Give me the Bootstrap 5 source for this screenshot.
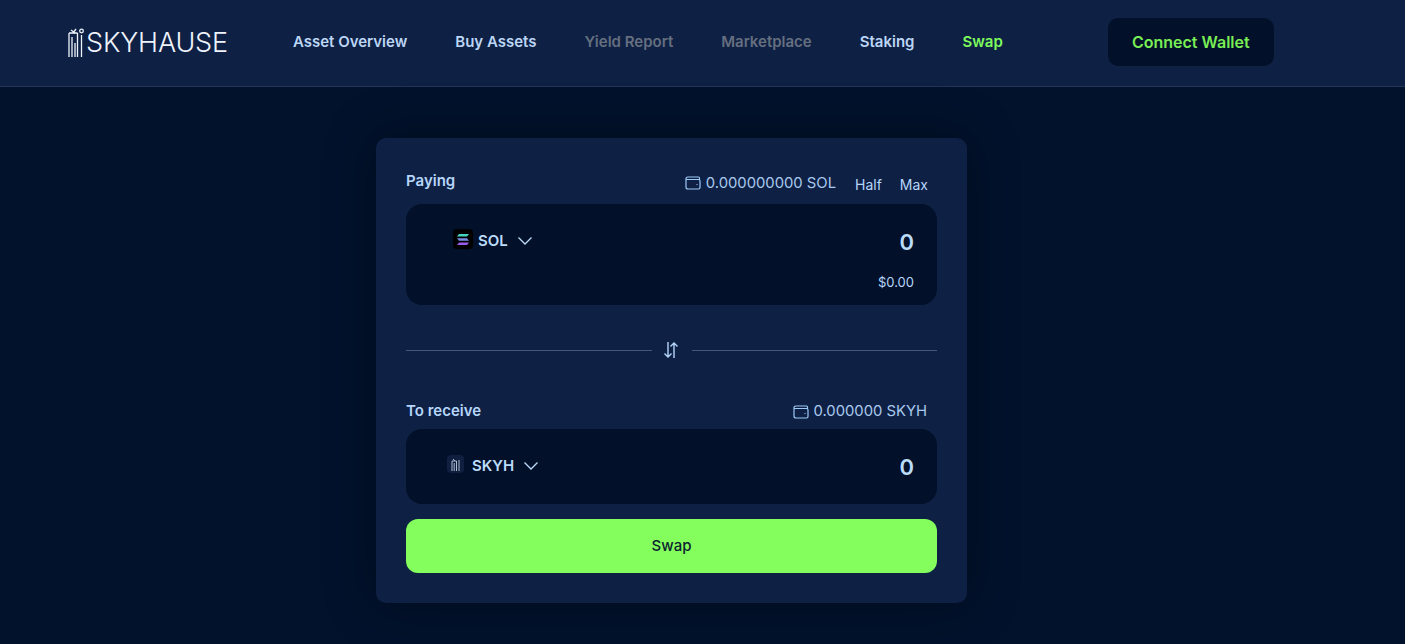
<!DOCTYPE html>
<html lang="en">
<head>
    <meta charset="UTF-8">
    <meta name="viewport" content="width=device-width, initial-scale=1.0">
    <title>Skyhause Swap</title>
    <link rel="stylesheet" href="https://cdn.jsdelivr.net/npm/bootstrap@5.3.2/dist/css/bootstrap.min.css">
    <style>
        html, body { height: 644px; overflow: hidden; }
        body { background: #02122c; font-family: Inter, "Liberation Sans", sans-serif; color: #bcdcfb; }
        .top-bar { height: 87px; background: #0e2044; border-bottom: 1px solid #25365a; padding: 0 0 2px 68px; }
        .logo-word { font-size: 27px; font-weight: 300; color: #eef3fb; letter-spacing: -.15px; line-height: 1; margin-left: 1px; }
        .menu-row { margin-left: 65px; gap: 48px; }
        .menu-link { font-size: 15px; font-weight: 600; color: #bcd6f5; text-decoration: none; }
        .menu-link.muted-link { color: #656f7f; }
        .menu-link.on { color: #7ffb5c; }
        .wallet-btn { width: 166px; height: 48px; margin-left: 105px; background: #021029; color: #79ee55; border: 0; border-radius: 10px; font-size: 16px; font-weight: 600; }
        .swap-box { width: 591px; height: 465px; margin: 51px 0 0 376px; padding: 30px; background: #0e2044; border-radius: 10px; box-shadow: 0 0 50px rgba(0, 0, 0, .35); }
        .field-label { font-size: 15px; font-weight: 600; color: #b5d6fa; }
        .pay-head .field-label { margin-top: -2px; }
        .bal-text { font-size: 14.8px; color: #a9c9ee; gap: 5px; }
        .pay-head .bal-text { margin-top: 2px; }
        .mini-link { font-size: 14px; color: #b5d6fa; margin-top: 4px; }
        .half-link { margin-left: 19px; }
        .max-link { margin: 4px 9px 0 18px; }
        .pay-head { height: 36px; padding-bottom: 8px; }
        .token-panel { background: #021029; border-radius: 16px; }
        .pay-panel { height: 101px; padding: 24px 23px 0 47px; }
        .get-panel { height: 75px; padding: 24px 23px 0 41px; }
        .token-name { font-size: 15px; font-weight: 600; color: #bcdcfb; margin: 2px 9px 0 5px; }
        .token-arrow { margin-top: 5px; }
        .token-ico { width: 20px; height: 20px; margin-top: 1px; border-radius: 4px; background: #000; }
        .skyh-ico { width: 17px; height: 18px; margin: 2px 3px 0 0; background: #101f3f; }
        .amount-val { font-size: 22px; font-weight: 600; color: #bcdcfb; line-height: 26px; margin-top: 1px; }
        .usd-val { font-size: 13px; color: #b5d6fa; margin-top: 18px; }
        .flip-row { height: 91px; }
        .flip-line { flex: 1; height: 1px; background: #46587a; }
        .flip-ico { width: 40px; }
        .flip-ico svg { margin: -1px 0 0 -2px; }
        .get-head { height: 33px; padding-bottom: 2px; }
        .get-head .bal-text { margin-right: 10px; }
        .swap-btn { width: 100%; height: 54px; margin-top: 15px; background: #84fe5c; color: #0c1f30; border: 0; border-radius: 12px; font-size: 15px; font-weight: 500; }
    </style>
</head>
<body>
    <header class="top-bar d-flex align-items-center">
        <a class="d-flex align-items-center text-decoration-none" href="#">
            <svg width="17" height="29" viewBox="0 0 17 29" fill="none" stroke="#eef3fb" stroke-width="1.3">
                <path d="M1 5v24M1 5h8.500M4 9v20M7 15v14M9.500 5v24M13.500 7v22"/>
                <path d="M3 2l4 3M8 1 5 5"/>
                <circle cx="13.500" cy="3" r="1.800"/>
            </svg>
            <span class="logo-word">SKYHAUSE</span>
        </a>
        <nav class="menu-row d-flex align-items-center">
            <a class="menu-link" href="#">Asset Overview</a>
            <a class="menu-link" href="#">Buy Assets</a>
            <a class="menu-link muted-link" href="#">Yield Report</a>
            <a class="menu-link muted-link" href="#">Marketplace</a>
            <a class="menu-link" href="#">Staking</a>
            <a class="menu-link on" href="#">Swap</a>
        </nav>
        <button class="wallet-btn" type="button">Connect Wallet</button>
    </header>

    <main class="swap-box">
        <div class="pay-head d-flex align-items-center">
            <span class="field-label">Paying</span>
            <span class="bal-text d-flex align-items-center ms-auto">
                <svg width="16" height="14" viewBox="0 0 16 14" fill="none" stroke="#9cc9f5" stroke-width="1.2">
                    <path d="M3 1h10.500a1 1 0 0 1 1 1v1.500M1 3.500a2 2 0 0 1 2-2.500M1 3.500V11a2 2 0 0 0 2 2h10.500a1.500 1.500 0 0 0 1.500-1.500V5a1.500 1.500 0 0 0-1.500-1.500H1M11.500 8.500h1"/>
                </svg>
                0.000000000 SOL
            </span>
            <span class="mini-link half-link">Half</span>
            <span class="mini-link max-link">Max</span>
        </div>
        <div class="token-panel pay-panel d-flex justify-content-between">
            <div class="d-flex align-items-start">
                <span class="token-ico d-flex align-items-center justify-content-center">
                    <svg width="12" height="11" viewBox="0 0 12 11">
                        <path d="M2 0h10l-2 2.500H0z" fill="#45d4c0"/>
                        <path d="M0 4.200h10l2 2.500H2z" fill="#7a8de4"/>
                        <path d="M2 8.500h10L10 11H0z" fill="#9a5cec"/>
                    </svg>
                </span>
                <span class="token-name">SOL</span>
                <svg class="token-arrow" width="16" height="16" viewBox="0 0 16 16" fill="none" stroke="#bcdcfb" stroke-width="1.3">
                    <path d="M1.500 4.500 8 11l6.500-6.500"/>
                </svg>
            </div>
            <div class="text-end">
                <div class="amount-val">0</div>
                <div class="usd-val">$0.00</div>
            </div>
        </div>

        <div class="flip-row d-flex align-items-center">
            <span class="flip-line"></span>
            <span class="flip-ico d-flex justify-content-center">
                <svg width="16" height="18" viewBox="0 0 16 18" fill="none" stroke="#b5d6fa" stroke-width="1.4">
                    <path d="M5 1v15M1.500 12.500 5 16l3.500-3.500M11 17V2M7.500 5.500 11 2l3.500 3.500"/>
                </svg>
            </span>
            <span class="flip-line"></span>
        </div>

        <div class="get-head d-flex align-items-center justify-content-between">
            <span class="field-label">To receive</span>
            <span class="bal-text d-flex align-items-center">
                <svg width="16" height="14" viewBox="0 0 16 14" fill="none" stroke="#9cc9f5" stroke-width="1.2">
                    <path d="M3 1h10.500a1 1 0 0 1 1 1v1.500M1 3.500a2 2 0 0 1 2-2.500M1 3.500V11a2 2 0 0 0 2 2h10.500a1.500 1.500 0 0 0 1.500-1.500V5a1.500 1.500 0 0 0-1.500-1.500H1M11.500 8.500h1"/>
                </svg>
                0.000000 SKYH
            </span>
        </div>
        <div class="token-panel get-panel d-flex justify-content-between">
            <div class="d-flex align-items-start">
                <span class="token-ico skyh-ico d-flex align-items-center justify-content-center">
                    <svg width="9" height="13" viewBox="0 0 9 13" fill="none" stroke="#aebdd2" stroke-width="1">
                        <path d="M1 3v10M1 3h4.500M3.200 5v8M5.500 3v10M8 2v11M2 1l2 2"/>
                    </svg>
                </span>
                <span class="token-name">SKYH</span>
                <svg class="token-arrow" width="16" height="16" viewBox="0 0 16 16" fill="none" stroke="#bcdcfb" stroke-width="1.3">
                    <path d="M1.500 4.500 8 11l6.500-6.500"/>
                </svg>
            </div>
            <div class="amount-val">0</div>
        </div>
        <button class="swap-btn" type="button">Swap</button>
    </main>

    <script src="https://cdn.jsdelivr.net/npm/bootstrap@5.3.2/dist/js/bootstrap.bundle.min.js"></script>
</body>
</html>
